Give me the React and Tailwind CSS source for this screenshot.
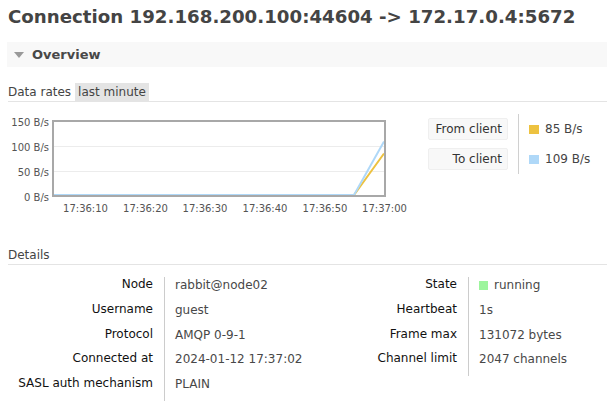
import React from "react";

const xTicks = [
  { x: 85.5, t: "17:36:10" },
  { x: 145.5, t: "17:36:20" },
  { x: 205, t: "17:36:30" },
  { x: 265, t: "17:36:40" },
  { x: 325, t: "17:36:50" },
  { x: 384.5, t: "17:37:00" },
];

const yTicks = [
  { y: 123.5, t: "150 B/s" },
  { y: 148, t: "100 B/s" },
  { y: 173, t: "50 B/s" },
  { y: 198, t: "0 B/s" },
];

function Chart() {
  const off = 112;
  return (
    <svg width="420" height="104" viewBox={`0 ${off} 420 104`} className="block shrink-0">
      <line x1="54" x2="384" y1="147.5" y2="147.5" stroke="#ececec" strokeWidth="1" />
      <line x1="54" x2="384" y1="172.5" y2="172.5" stroke="#ececec" strokeWidth="1" />
      <polyline points="54,196 354,196 384,154.5" fill="none" stroke="#edc240" strokeWidth="2" />
      <polyline points="54,196 354,196 384,142.5" fill="none" stroke="#afd8f8" strokeWidth="2" />
      <rect x="53" y="122" width="332" height="75" fill="none" stroke="#a8a8a8" strokeWidth="2" />
      {yTicks.map((t) => (
        <text key={t.t} x="49" y={t.y + 3.5} textAnchor="end" fontSize="10" fill="#545454" fontFamily="DejaVu Sans, sans-serif">
          {t.t}
        </text>
      ))}
      {xTicks.map((t) => (
        <text key={t.t} x={t.x} y="212.5" textAnchor="middle" fontSize="10" fill="#545454" fontFamily="DejaVu Sans, sans-serif">
          {t.t}
        </text>
      ))}
    </svg>
  );
}

const left = [
  ["Node", "rabbit@node02"],
  ["Username", "guest"],
  ["Protocol", "AMQP 0-9-1"],
  ["Connected at", "2024-01-12 17:37:02"],
  ["SASL auth mechanism", "PLAIN"],
];

const right = [
  ["State", "running"],
  ["Heartbeat", "1s"],
  ["Frame max", "131072 bytes"],
  ["Channel limit", "2047 channels"],
];

export default function App() {
  return (
    <div className="w-[607px] h-[402px] overflow-hidden bg-white font-['DejaVu_Sans',sans-serif] text-[#484848]">
      <div className="pl-2 pt-[6px]">
        <h1 className="h-[22px] text-[18.2px] leading-[22px] font-bold text-[#444] whitespace-nowrap">
          Connection 192.168.200.100:44604 -&gt; 172.17.0.4:5672
        </h1>
        <div className="mt-[14px] -ml-px h-[25px] bg-[#f8f8f8] flex items-center">
          <span className="ml-[7px] w-0 h-0 border-l-[5px] border-r-[5px] border-t-[6px] border-l-transparent border-r-transparent border-t-[#999]" />
          <span className="ml-[8px] text-[13px] font-bold text-[#484848] leading-none">Overview</span>
        </div>
        <div className="mt-[16px] h-[19px] border-b border-[#e4e4e4] flex items-start text-[12px] leading-[18px] text-[#444]">
          <span>Data rates</span>
          <span className="ml-[4px] bg-[#e4e4e4] px-[3px] text-[#444]">last minute</span>
        </div>
      </div>
      <div className="mt-[9px] flex items-start">
        <Chart />
        <div className="ml-[8px] mt-[7px] flex flex-col gap-[8px]">
          <div className="w-[80px] h-[22px] bg-[#f8f8f8] border border-[#efefef] rounded-[2px] text-right pr-[5px] text-[12px] leading-[20px] text-[#333]">
            From client
          </div>
          <div className="w-[80px] h-[22px] bg-[#f8f8f8] border border-[#efefef] rounded-[2px] text-right pr-[5px] text-[12px] leading-[20px] text-[#333]">
            To client
          </div>
        </div>
        <div className="ml-[10px] mt-[3px] h-[60px] border-l border-[#d0d0d0] pl-[10px] flex flex-col text-[12px] text-[#444]">
          <div className="mt-[6px] h-[18px] flex items-center">
            <span className="w-[10px] h-[9px] bg-[#edc240] mr-[6px]" />
            <span>85 B/s</span>
          </div>
          <div className="mt-[12px] h-[18px] flex items-center">
            <span className="w-[10px] h-[9px] bg-[#afd8f8] mr-[6px]" />
            <span>109 B/s</span>
          </div>
        </div>
      </div>
      <div className="pl-2 mt-[31px]">
        <div className="h-[19px] border-b border-[#e4e4e4] text-[12px] leading-[18px] text-[#444]">Details</div>
        <div className="mt-[12px] flex text-[12px] leading-[15px]">
          <div className="grid grid-cols-[156px_176px] auto-rows-[24.75px]">
            {left.map(([k, v]) => (
              <React.Fragment key={k}>
                <div className="text-right pr-[11px] text-[#111] whitespace-nowrap">{k}</div>
                <div className="border-l border-[#cccccc] pl-[10px] pt-[1px] text-[#484848] whitespace-nowrap">{v}</div>
              </React.Fragment>
            ))}
          </div>
          <div className="grid grid-cols-[128px_130px] auto-rows-[24.75px]">
            {right.map(([k, v]) => (
              <React.Fragment key={k}>
                <div className="text-right pr-[11px] text-[#111] whitespace-nowrap">{k}</div>
                <div className="border-l border-[#cccccc] pl-[10px] pt-[1px] text-[#484848] whitespace-nowrap flex items-start">
                  {k === "State" && <span className="mt-[3px] w-[9px] h-[9px] bg-[#9df59d] mr-[6px]" />}
                  <span>{v}</span>
                </div>
              </React.Fragment>
            ))}
          </div>
        </div>
      </div>
    </div>
  );
}
